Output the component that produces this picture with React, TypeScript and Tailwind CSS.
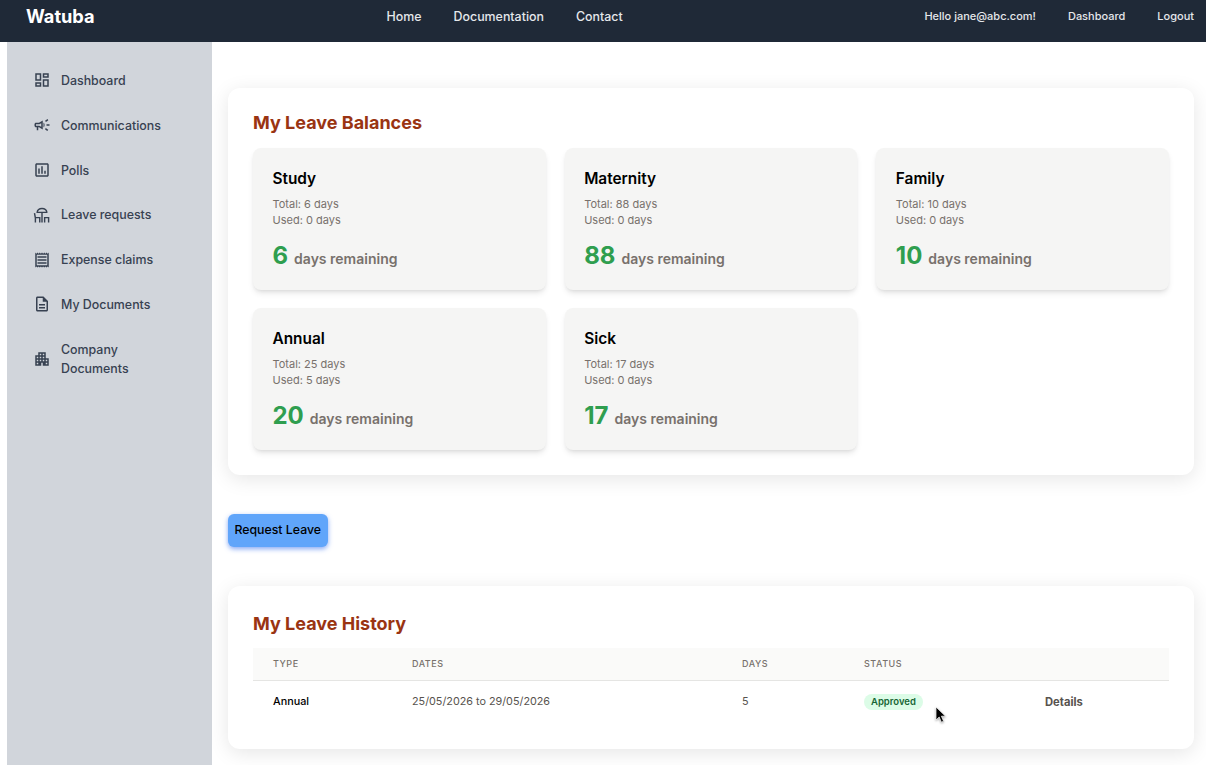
import {
  MdOutlineDashboard,
  MdOutlineCampaign,
  MdOutlinePoll,
  MdOutlineReceipt,
  MdOutlineDescription,
  MdOutlineApartment,
} from "react-icons/md";

// the react-icons deck has a flat roof, the reference has a round parasol
function DeckIcon({ className }: { className?: string }) {
  return (
    <svg viewBox="0 0 24 24" fill="none" stroke="currentColor" strokeWidth="1.9" className={className}>
      <path d="M5.500 8.500C6.500 1.500 17.500 1.500 18.500 8.500z" strokeLinejoin="round" />
      <path d="M12 8.500V22" />
      <path d="M2 9.500l1.200 6.500v6M3.200 15.500H9V22" />
      <path d="M15.500 22v-6.500h5.300V22" />
    </svg>
  );
}

const navItems = [
  { label: "Dashboard", icon: MdOutlineDashboard, h: "h-[44.8px]" },
  { label: "Communications", icon: MdOutlineCampaign, h: "h-[44.8px]" },
  { label: "Polls", icon: MdOutlinePoll, h: "h-[44.8px]" },
  { label: "Leave requests", icon: DeckIcon, h: "h-[44.8px]" },
  { label: "Expense claims", icon: MdOutlineReceipt, h: "h-[44.8px]" },
  { label: "My Documents", icon: MdOutlineDescription, h: "h-[44.8px]" },
  { label: "Company Documents", icon: MdOutlineApartment, h: "h-[64.500px]" },
];

const balances = [
  { name: "Study", total: 6, used: 0, left: 6 },
  { name: "Maternity", total: 88, used: 0, left: 88 },
  { name: "Family", total: 10, used: 0, left: 10 },
  { name: "Annual", total: 25, used: 5, left: 20 },
  { name: "Sick", total: 17, used: 0, left: 17 },
];

function BalanceCard({ name, total, used, left }: { name: string; total: number; used: number; left: number }) {
  return (
    <div className="h-[142px] rounded-lg bg-[#f5f5f4] px-[19.5px] pt-[20px] shadow-md">
      <h3 className="text-[15.4px] leading-[22px] font-semibold text-black">{name}</h3>
      <p className="mt-[6px] text-[11px] leading-[16px] text-[#78716c]">Total: {total} days</p>
      <p className="text-[11px] leading-[16px] text-[#78716c]">Used: {used} days</p>
      <p className="mt-[12px] flex items-baseline text-[#78716c]">
        <span className="text-[24px] leading-[32px] font-bold text-[#2f9e4f]">{left}</span>
        <span className="ml-[6px] text-[14px] font-semibold">days remaining</span>
      </p>
    </div>
  );
}

export default function App() {
  return (
    <div className="flex h-[765px] w-[1206px] flex-col overflow-hidden bg-white font-['Inter',sans-serif]">
      <header className="flex h-[42px] shrink-0 bg-[#1f2937] text-[#e5e7eb]">
        <div className="flex items-center pb-[9px] pl-[26px] text-[18.2px] font-bold text-white">Watuba</div>
        <nav className="ml-[292px] flex items-center gap-[32px] pb-[8px] text-[12.4px] font-medium">
          <span>Home</span>
          <span>Documentation</span>
          <span>Contact</span>
        </nav>
        <div className="ml-auto flex items-center gap-[32px] pr-[12px] pb-[9px] text-[11px] font-medium">
          <span>Hello jane@abc.com!</span>
          <span>Dashboard</span>
          <span>Logout</span>
        </div>
      </header>

      <div className="flex flex-1 pl-[7px]">
        <aside className="w-[205px] shrink-0 bg-[#d1d5db] pt-[16.100px]">
          {navItems.map((item) => (
            <div key={item.label} className={`flex items-center pl-[26px] pr-8 ${item.h}`}>
              <item.icon className="h-[18px] w-[18px] shrink-0 text-[#374151]" />
              <span className="ml-[10px] text-[12.4px] leading-[19px] font-medium text-[#374151]">{item.label}</span>
            </div>
          ))}
        </aside>

        <main className="flex-1 px-[16px] pt-[46px]">
          <section className="h-[387px] w-[966px] rounded-xl bg-white px-[25px] pt-[23px] shadow-[0_4px_20px_rgba(0,0,0,0.1)]">
            <h2 className="text-[18px] leading-[24px] font-bold text-[#9a3412]">My Leave Balances</h2>
            <div className="mt-[13px] grid grid-cols-3 gap-x-[19px] gap-y-[18px]">
              {balances.map((b) => (
                <BalanceCard key={b.name} {...b} />
              ))}
            </div>
          </section>

          <button className="mt-[39px] block h-[33px] w-[99.500px] rounded-md bg-[#60a5fa] text-[12.3px] font-medium text-black shadow-[0_2px_5px_rgba(37,99,235,0.55)]">
            Request Leave
          </button>

          <section className="relative mt-[39px] h-[163px] w-[966px] rounded-xl bg-white px-[25px] pt-[26px] shadow-[0_4px_20px_rgba(0,0,0,0.1)]">
            <h2 className="text-[18px] leading-[24px] font-bold text-[#9a3412]">My Leave History</h2>
            <div className="mt-[12px] grid h-[33px] grid-cols-[139px_330px_122px_181px_1fr] items-center border-b border-[#e5e5e3] bg-[#fafaf9] pl-[20px] text-[9px] font-medium tracking-[0.06em] text-[#78716c]">
              <span>TYPE</span>
              <span>DATES</span>
              <span>DAYS</span>
              <span>STATUS</span>
              <span />
            </div>
            <div className="grid h-[43px] grid-cols-[139px_330px_122px_181px_1fr] items-center pl-[20px] text-[10.8px]">
              <span className="font-medium text-black">Annual</span>
              <span className="text-[#57534e]">25/05/2026 to 29/05/2026</span>
              <span className="text-[#57534e]">5</span>
              <span>
                <span className="inline-block rounded-full bg-[#dcfce7] px-[7px] py-[1px] text-[9.5px] leading-[14px] font-semibold text-[#166534]">
                  Approved
                </span>
              </span>
              <span className="text-[11.2px] font-bold text-[#57534e]">Details</span>
            </div>
            {/* mouse pointer caught in the screenshot */}
            <svg viewBox="0 0 12 18" className="absolute top-[120px] left-[707px] h-[18px] w-[12px] drop-shadow-[0_1px_1px_rgba(0,0,0,0.35)]">
              <path d="M1 1v13l3.2-3 2.2 5.2 2.2-1-2.2-5H10.500z" fill="#000" stroke="#fff" strokeWidth="0.7" />
            </svg>
          </section>
        </main>
      </div>
    </div>
  );
}
